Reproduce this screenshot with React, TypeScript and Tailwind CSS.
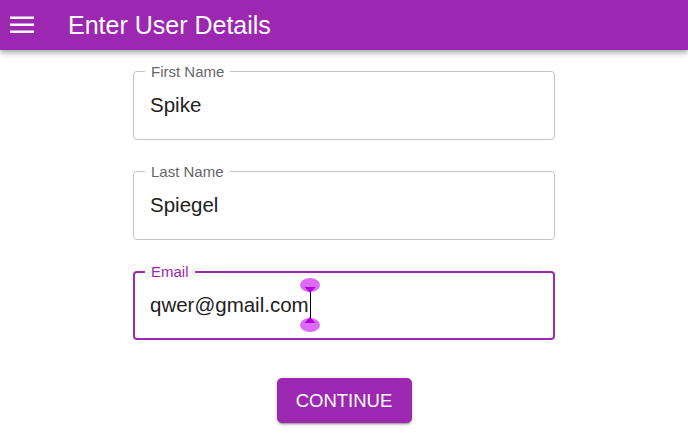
export default function App() {
  const fields = [
    { label: "First Name", value: "Spike", focused: false },
    { label: "Last Name", value: "Spiegel", focused: false },
    { label: "Email", value: "qwer@gmail.com", focused: true },
  ]

  return (
    <div className="min-h-screen w-full bg-white font-['Liberation_Sans',Arial,sans-serif]">
      {/* App bar */}
      <header className="flex h-[50px] items-center bg-[#9c27b0] pl-[10px] shadow-[0_2px_4px_-1px_rgba(0,0,0,0.2),0_4px_5px_0_rgba(0,0,0,0.14),0_1px_10px_0_rgba(0,0,0,0.12)]">
        <svg width="24" height="24" viewBox="0 0 24 24" className="text-white">
          <rect x="0" y="3.5" width="24" height="2.5" fill="currentColor" />
          <rect x="0" y="10.5" width="24" height="2.5" fill="currentColor" />
          <rect x="0" y="17.5" width="24" height="2.5" fill="currentColor" />
        </svg>
        <h1 className="ml-[34px] text-[25px] leading-none text-white">Enter User Details</h1>
      </header>

      {/* Form */}
      <div className="mx-auto flex w-[422px] flex-col gap-[31px] pt-[21px]">
        {fields.map((f) => (
          <div
            key={f.label}
            className={
              f.focused
                ? "relative flex h-[69px] items-center rounded-[4px] border-2 border-[#9c27b0] pl-[15px]"
                : "relative flex h-[69px] items-center rounded-[4px] border border-[#c4c4c4] pl-[16px]"
            }
          >
            <span
              className={
                f.focused
                  ? "absolute left-[10px] top-[-10px] bg-white px-[6px] text-[15px] leading-[17px] text-[#9c27b0]"
                  : "absolute left-[11px] top-[-9px] bg-white px-[6px] text-[15px] leading-[17px] text-[#666]"
              }
            >
              {f.label}
            </span>
            <span className="relative text-[20.5px] leading-none text-[#222]">
              {f.value}
              {f.focused && (
                <>
                  <span className="absolute right-[-2px] top-[-3px] h-[26px] w-[1px] bg-black" />
                  <svg
                    width="20"
                    height="16"
                    viewBox="0 0 20 16"
                    className="absolute right-[-11px] top-[-17px]"
                  >
                    <ellipse cx="10" cy="7" rx="10" ry="7" fill="#dc6cf5" />
                    <path d="M4.5 9 L10 15 L15.5 9 Z" fill="#b400e0" />
                  </svg>
                  <svg
                    width="20"
                    height="16"
                    viewBox="0 0 20 16"
                    className="absolute right-[-11px] top-[21px]"
                  >
                    <ellipse cx="10" cy="9" rx="10" ry="7" fill="#dc6cf5" />
                    <path d="M4.5 7 L10 1 L15.5 7 Z" fill="#b400e0" />
                  </svg>
                </>
              )}
            </span>
          </div>
        ))}

        <div className="flex justify-center pt-[7px]">
          <button className="h-[45px] w-[135px] rounded-[5px] bg-[#9c27b0] text-[18.5px] text-white shadow-[0_3px_1px_-2px_rgba(0,0,0,0.2),0_2px_2px_0_rgba(0,0,0,0.14),0_1px_5px_0_rgba(0,0,0,0.12)]">
            CONTINUE
          </button>
        </div>
      </div>
    </div>
  )
}
